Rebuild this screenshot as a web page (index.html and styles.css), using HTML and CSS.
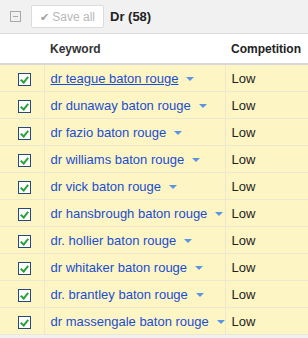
FILE: index.html
```html
<!DOCTYPE html>
<html lang="en">
<head>
    <meta charset="UTF-8">
    <title>Keywords</title>
    <link rel="stylesheet" href="styles.css">
</head>
<body>
    <div class="toolbar">
        <span class="collapse"></span>
        <button class="save-btn" disabled><span class="tick">&#10004;</span> Save all</button>
        <span class="group-title">Dr (58)</span>
    </div>
    <table class="grid">
        <thead>
            <tr>
                <th class="col-check"></th>
                <th class="col-kw">Keyword</th>
                <th class="col-comp">Competition</th>
            </tr>
        </thead>
        <tbody>
            <tr><td class="col-check"><span class="cb"></span></td><td class="col-kw"><a href="#" class="kw active">dr teague baton rouge</a><span class="arrow"></span></td><td class="col-comp">Low</td></tr>
            <tr><td class="col-check"><span class="cb"></span></td><td class="col-kw"><a href="#" class="kw">dr dunaway baton rouge</a><span class="arrow"></span></td><td class="col-comp">Low</td></tr>
            <tr><td class="col-check"><span class="cb"></span></td><td class="col-kw"><a href="#" class="kw">dr fazio baton rouge</a><span class="arrow"></span></td><td class="col-comp">Low</td></tr>
            <tr><td class="col-check"><span class="cb"></span></td><td class="col-kw"><a href="#" class="kw">dr williams baton rouge</a><span class="arrow"></span></td><td class="col-comp">Low</td></tr>
            <tr><td class="col-check"><span class="cb"></span></td><td class="col-kw"><a href="#" class="kw">dr vick baton rouge</a><span class="arrow"></span></td><td class="col-comp">Low</td></tr>
            <tr><td class="col-check"><span class="cb"></span></td><td class="col-kw"><a href="#" class="kw">dr hansbrough baton rouge</a><span class="arrow"></span></td><td class="col-comp">Low</td></tr>
            <tr><td class="col-check"><span class="cb"></span></td><td class="col-kw"><a href="#" class="kw">dr. hollier baton rouge</a><span class="arrow"></span></td><td class="col-comp">Low</td></tr>
            <tr><td class="col-check"><span class="cb"></span></td><td class="col-kw"><a href="#" class="kw">dr whitaker baton rouge</a><span class="arrow"></span></td><td class="col-comp">Low</td></tr>
            <tr><td class="col-check"><span class="cb"></span></td><td class="col-kw"><a href="#" class="kw">dr. brantley baton rouge</a><span class="arrow"></span></td><td class="col-comp">Low</td></tr>
            <tr><td class="col-check"><span class="cb"></span></td><td class="col-kw"><a href="#" class="kw">dr massengale baton rouge</a><span class="arrow"></span></td><td class="col-comp">Low</td></tr>
        </tbody>
    </table>
</body>
</html>
```

FILE: styles.css
```css
body {
    margin: 0;
    font-family: "Liberation Sans", Arial, sans-serif;
    font-size: 13px;
    background-color: #f1f1f1;
    width: 308px;
    height: 338px;
    overflow: hidden;
}
.toolbar {
    height: 34px;
    display: flex;
    align-items: center;
    border-bottom: 1px solid #dcdcdc;
    box-sizing: border-box;
    padding-left: 10px;
}
.collapse {
    width: 9px;
    height: 9px;
    border: 1px solid #a8a8a8;
    position: relative;
    margin-right: 10px;
}
.collapse::after {
    content: "";
    position: absolute;
    left: 2px;
    top: 4px;
    width: 5px;
    height: 1px;
    background: #a8a8a8;
}
.save-btn {
    width: 73px;
    height: 23px;
    background: #fff;
    border: 1px solid #dcdcdc;
    border-radius: 2px;
    color: #b8b8b8;
    font-family: inherit;
    font-size: 12px;
    padding: 0;
    margin-right: 6px;
}
.tick {
    color: #a0a0a0;
    font-size: 11px;
}
.group-title {
    font-weight: bold;
    color: #222;
    font-size: 13px;
}
.grid {
    border-collapse: collapse;
    width: 308px;
    table-layout: fixed;
}
.grid th {
    background: #fff;
    height: 29px;
    text-align: left;
    font-weight: bold;
    font-size: 12px;
    color: #333;
    padding: 0 4px 0 6px;
    border-bottom: 2px solid #d8d8d8;
}
.grid td {
    background: #fef5c4;
    height: 26px;
    padding: 0 4px 0 6px;
    border-bottom: 1px solid #ebe7d0;
    white-space: nowrap;
    overflow: hidden;
}
.grid td + td {
    border-left: 1px solid #ebe7d0;
}
.grid .col-check {
    width: 34px;
    text-align: center;
    padding: 0 2px 0 8px;
}
.grid .col-kw {
    width: 171px;
}
.grid .col-comp {
    color: #222;
}
.cb {
    display: inline-block;
    width: 11px;
    height: 11px;
    border: 1px solid #28477a;
    background: #fff;
    vertical-align: middle;
    position: relative;
}
.cb::after {
    content: "";
    position: absolute;
    left: 3px;
    top: 1px;
    width: 3px;
    height: 6px;
    border: solid #2aa336;
    border-width: 0 2px 2px 0;
    transform: rotate(40deg);
}
.kw {
    color: #1a4ed0;
    text-decoration: none;
}
.kw.active {
    text-decoration: underline;
}
.arrow {
    display: inline-block;
    margin-left: 8px;
    width: 0;
    height: 0;
    border-left: 4px solid transparent;
    border-right: 4px solid transparent;
    border-top: 4px solid #5a95e4;
    vertical-align: middle;
}
```
